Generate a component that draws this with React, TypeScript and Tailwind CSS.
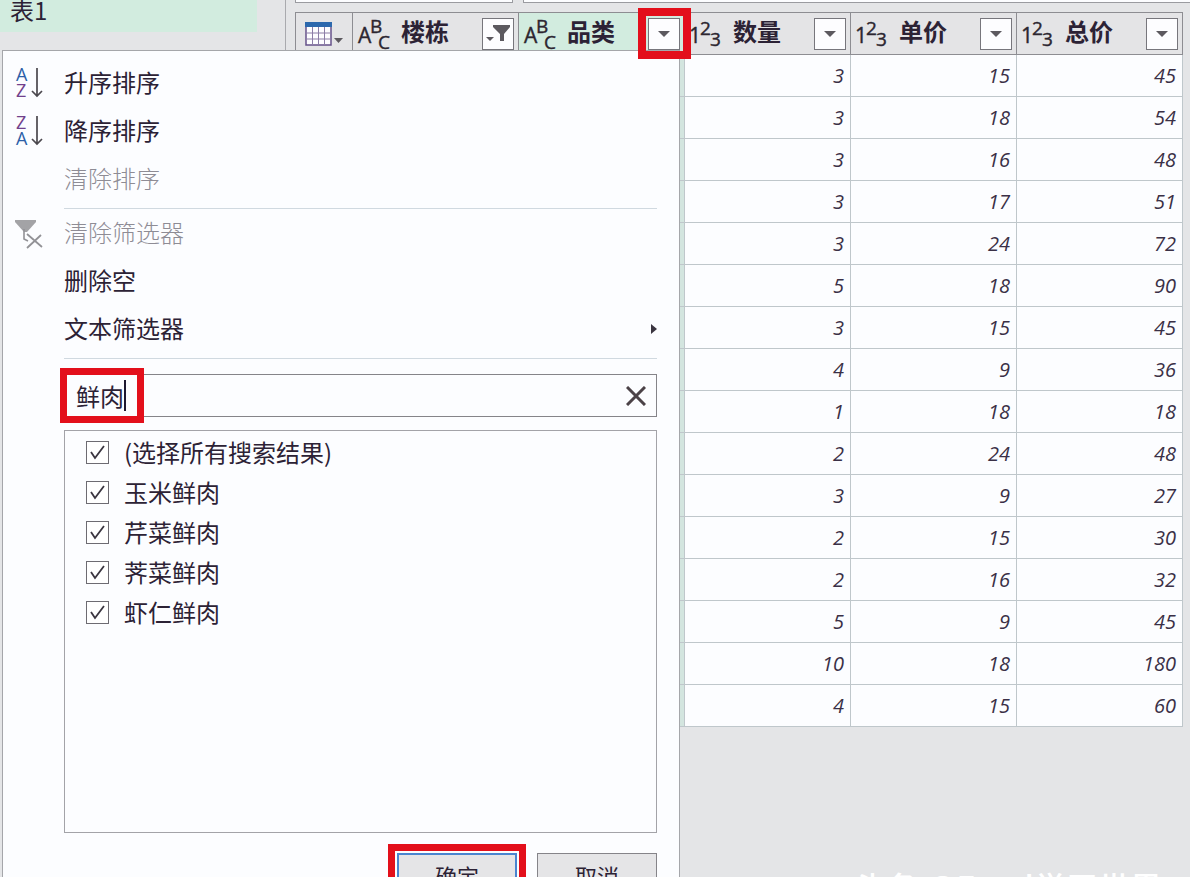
import React, { useState } from "react";

type ColumnKind = "text" | "number";

const columns: { name: string; kind: ColumnKind; filtered?: boolean; active?: boolean }[] = [
  { name: "楼栋", kind: "text", filtered: true },
  { name: "品类", kind: "text", active: true },
  { name: "数量", kind: "number" },
  { name: "单价", kind: "number" },
  { name: "总价", kind: "number" },
];

const rows = [
  [3, 15, 45],
  [3, 18, 54],
  [3, 16, 48],
  [3, 17, 51],
  [3, 24, 72],
  [5, 18, 90],
  [3, 15, 45],
  [4, 9, 36],
  [1, 18, 18],
  [2, 24, 48],
  [3, 9, 27],
  [2, 15, 30],
  [2, 16, 32],
  [5, 9, 45],
  [10, 18, 180],
  [4, 15, 60],
];

const options = ["(选择所有搜索结果)", "玉米鲜肉", "芹菜鲜肉", "荠菜鲜肉", "虾仁鲜肉"];

function KindIcon({ kind }: { kind: ColumnKind }) {
  const isText = kind === "text";
  const [a, b, c] = isText ? ["A", "B", "C"] : ["1", "2", "3"];
  return (
    <svg
      width="40"
      height="41"
      viewBox="0 0 40 41"
      className="shrink-0 fill-[#2c2630] stroke-[#2c2630] font-['Open_Sans',sans-serif] font-normal"
      strokeWidth="0.4"
      aria-hidden="true"
    >
      <text x={isText ? 1 : 0} y="30" fontSize="21">{a}</text>
      <text x={isText ? 13 : 11} y={isText ? 20 : 22} fontSize="19">{b}</text>
      <text x={isText ? 21 : 21} y={isText ? 36 : 33} fontSize="19">{c}</text>
    </svg>
  );
}

function FilterButton({ label, filtered }: { label: string; filtered?: boolean }) {
  return (
    <button
      type="button"
      aria-label={label}
      className="flex h-8 w-8 shrink-0 items-center justify-center border border-[#77767c] bg-[#fdfdff]"
    >
      {filtered ? (
        <svg width="28" height="28" viewBox="0 0 28 28" fill="#5c595f">
          <path d="M2 17h8l-4 4z" />
          <path d="M9 5h17v2l-6 7v7h-4v-7L9 7z" />
        </svg>
      ) : (
        <svg width="12" height="8" viewBox="0 0 12 8" fill="#5c595f">
          <path d="M0 1h12L6 7z" />
        </svg>
      )}
    </button>
  );
}

function SortIcon({ desc }: { desc?: boolean }) {
  return (
    <svg width="30" height="34" viewBox="0 0 30 34" className="font-['Open_Sans',sans-serif] font-medium" fill="none">
      <text x="1" y="15" fontSize="18" fill={desc ? "#71408c" : "#2d5fa8"}>{desc ? "Z" : "A"}</text>
      <text x="1" y="31" fontSize="18" fill={desc ? "#2d5fa8" : "#71408c"}>{desc ? "A" : "Z"}</text>
      <path d="M22 2v28M17 25l5 5 5-5" stroke="#4b484e" strokeWidth="1.7" />
    </svg>
  );
}

function ClearFilterIcon() {
  return (
    <svg width="30" height="34" viewBox="0 0 30 34" fill="none">
      <path d="M0 4h21v2l-9 10H9L0 6z" fill="#a3a3a6" />
      <path d="M9 13v10l4 2" stroke="#929296" strokeWidth="1.6" />
      <path d="M12 18l15 13M26 19L12 32" stroke="#929296" strokeWidth="1.8" />
    </svg>
  );
}

function MenuItem({
  label,
  icon,
  disabled,
  submenu,
}: {
  label: string;
  icon?: React.ReactNode;
  disabled?: boolean;
  submenu?: boolean;
}) {
  return (
    <button
      type="button"
      disabled={disabled}
      className="flex h-12 w-full items-center pr-[22px] text-left text-[#2c2235] disabled:font-light disabled:text-[#8e8c95]"
    >
      <span className="w-[61px] shrink-0 pl-3">{icon}</span>
      <span className="flex-1 pb-[2px]">{label}</span>
      {submenu && (
        <svg width="6" height="10" viewBox="0 0 6 10" fill="#3a3540">
          <path d="M0 0l6 5-6 5z" />
        </svg>
      )}
    </button>
  );
}

function Option({ label }: { label: string }) {
  const [checked, setChecked] = useState(true);
  return (
    <label className="flex h-10 items-center gap-[15px] pl-[21px] text-[#2c2235]">
      <span className="grid">
        <input
          type="checkbox"
          checked={checked}
          onChange={(e) => setChecked(e.target.checked)}
          className="col-start-1 row-start-1 h-[23px] w-[23px] appearance-none border border-[#6d6b72] bg-white"
        />
        {checked && (
          <svg width="23" height="23" viewBox="0 0 23 23" fill="none" className="pointer-events-none col-start-1 row-start-1">
            <path d="M5 11l4 6 9-12" stroke="#3a3540" strokeWidth="1.8" />
          </svg>
        )}
      </span>
      <span>{label}</span>
    </label>
  );
}

function FilterMenu() {
  const [query, setQuery] = useState("鲜肉");
  return (
    <div className="absolute top-[50px] left-[2px] z-10 w-[678px] border border-[#a5a6aa] bg-[#fcfdff] pt-2 pb-8">
      <MenuItem label="升序排序" icon={<SortIcon />} />
      <MenuItem label="降序排序" icon={<SortIcon desc />} />
      <MenuItem label="清除排序" disabled />
      <hr className="mt-[5px] mr-[22px] ml-[61px] border-[#d0d9e0]" />
      <MenuItem label="清除筛选器" icon={<ClearFilterIcon />} disabled />
      <MenuItem label="删除空" />
      <MenuItem label="文本筛选器" submenu />
      <hr className="mt-[5px] mr-[22px] ml-[61px] border-[#d0d9e0]" />

      <div className="mr-[22px] ml-[61px]">
        <div className="relative mt-[15px] flex h-[43px] items-center border border-[#858489] bg-[#fcfdff]">
          <input
            type="text"
            aria-label="搜索"
            value={query}
            onChange={(e) => setQuery(e.target.value)}
            className="h-full min-w-0 flex-1 bg-transparent pl-[11px] text-[#2c2235] caret-transparent outline-none"
          />
          <button type="button" aria-label="清除" className="flex h-full w-10 items-center justify-center" onClick={() => setQuery("")}>
            <svg width="20" height="20" viewBox="0 0 20 20" stroke="#4b4247" strokeWidth="3">
              <path d="M1 1l18 18M19 1L1 19" />
            </svg>
          </button>
          {/* text caret and highlight frame */}
          <span className="absolute left-[59px] h-[31px] w-[2px] bg-[#1d1830]" />
          <span className="pointer-events-none absolute -top-[7px] -left-[5px] h-[55px] w-[84px] border-[7px] border-[#e30f1b]" />
        </div>

        <div className="mt-[13px] h-[403px] border border-[#a3a3a8] pt-px">
          {options.map((o) => (
            <Option key={o} label={o} />
          ))}
        </div>

        <div className="mt-5 flex justify-end gap-5 text-[22px]">
          <div className="relative">
            <button type="button" className="h-[46px] w-[120px] border-2 border-[#4a84cf] bg-[#e5e5e7] text-[#2c2235]">
              确定
            </button>
            <span className="pointer-events-none absolute -inset-[9px] border-[7px] border-[#e30f1b]" />
          </div>
          <button type="button" className="h-[46px] w-[120px] border border-[#858489] bg-[#e5e5e7] text-[#2c2235]">
            取消
          </button>
        </div>
      </div>
    </div>
  );
}

export default function App() {
  return (
    <div className="relative flex h-screen overflow-hidden bg-[#e4e5e7] font-['Noto_Sans_CJK_SC',sans-serif] text-2xl">
      <aside className="w-[286px] shrink-0 border-r border-[#a9aaae]">
        <div className="mr-7 flex h-8 items-end bg-[#d2ecdf] pl-[10px] leading-11 text-[#2c2235]">表1</div>
      </aside>

      <main className="min-w-0 flex-1">
        <div className="flex h-3 items-start gap-[10px] pl-[9px]">
          <div className="h-[3px] w-[218px] border-x border-b border-[#9a9ba0] bg-[#fcfdff]" />
          <div className="h-[3px] flex-1 border-b border-l border-[#9a9ba0] bg-[#fcfdff]" />
        </div>

        <div className="pr-[7px] pl-[9px]">
          <table className="w-full table-fixed border-separate border-spacing-0 border-t border-l border-[#8d8d92]">
            <thead>
              <tr className="h-[42px] bg-[#e4e4e6]">
                <th className="w-[57px] border-r border-b border-[#8d8d92] p-0">
                  <button type="button" aria-label="表" className="flex h-10 w-full items-center pl-[9px]">
                    <svg width="40" height="26" viewBox="0 0 40 26" fill="none">
                      <path d="M1 2h25v22H1z" fill="#fdfdff" stroke="#65518a" strokeWidth="1.5" />
                      <path d="M1 12h25M1 18h25M7.500 6v18M13.500 6v18M19.500 6v18" stroke="#8b7da6" />
                      <path d="M0 1h27v5H0z" fill="#2c68ad" />
                      <path d="M29 17h9l-4.500 5z" fill="#5c595f" />
                    </svg>
                  </button>
                </th>
                {columns.map((c) => (
                  <th
                    key={c.name}
                    className={`relative border-r border-b border-[#8d8d92] p-0 ${c.active ? "bg-[#d2ecdf]" : ""}`}
                  >
                    <div className="flex h-[41px] items-center pr-1 pl-1">
                      <KindIcon kind={c.kind} />
                      <span className="flex-1 pb-[6px] pl-1 text-left leading-9 font-bold text-[#2c2235]">{c.name}</span>
                      <FilterButton label={`筛选${c.name}`} filtered={c.filtered} />
                    </div>
                    {c.active && (
                      <span className="pointer-events-none absolute -top-[5px] -right-[7px] z-20 h-[51px] w-[53px] border-8 border-[#e30f1b]" />
                    )}
                  </th>
                ))}
              </tr>
            </thead>
            <tbody className="font-['Open_Sans',sans-serif] text-xl text-[#3a3046] italic">
              {rows.map((row, i) => (
                <tr key={i} className="h-[42px] bg-[#fcfdff]">
                  <td className="border-r border-b border-[#bfc7cb] p-0" />
                  <td className="border-r border-b border-[#bfc7cb] p-0" />
                  <td className="border-r border-b border-[#bfc7cb] bg-[#d3e5df] p-0" />
                  {row.map((value, j) => (
                    <td key={j} className="border-r border-b border-[#bfc7cb] py-0 pr-[6px] pl-0 text-right">
                      {value}
                    </td>
                  ))}
                </tr>
              ))}
            </tbody>
          </table>
        </div>
      </main>

      <FilterMenu />

      <div className="absolute top-[865px] right-[28px] text-[32px] font-medium whitespace-nowrap text-white">
        头条 @Excel学习世界
      </div>
    </div>
  );
}
